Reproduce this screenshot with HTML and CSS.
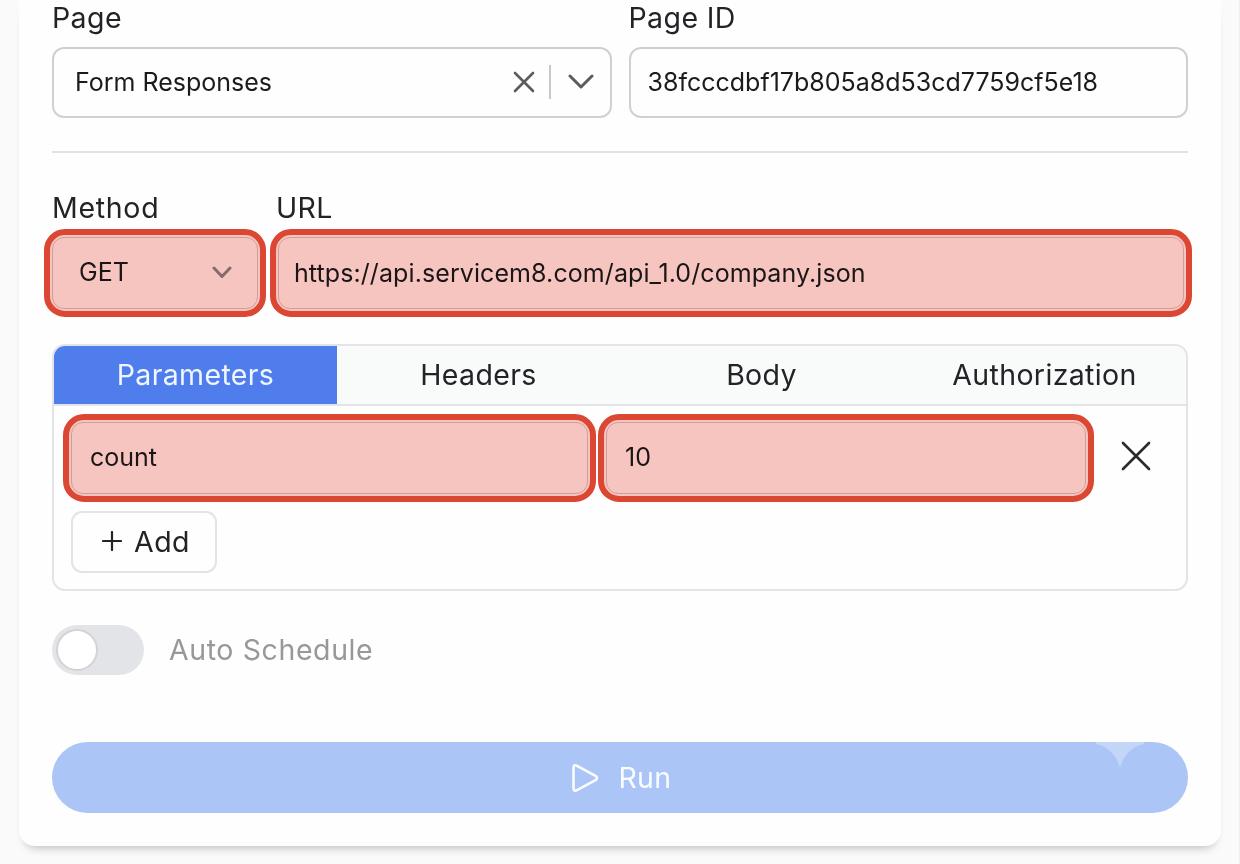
FILE: index.html
```
<!DOCTYPE html>
<html lang="en">
<head>
    <meta charset="UTF-8">
    <meta name="viewport" content="width=device-width, initial-scale=1.0">
    <title>API Request</title>
    <link rel="stylesheet" href="styles.css">
</head>
<body>
  <main class="card">
    <div class="page-row">
      <div class="form-group">
        <label class="label">Page</label>
        <div class="field select">
          <span class="select-value">Form Responses</span>
          <svg class="icon-clear" viewBox="0 0 22 22"><path d="M2 2L20 20M20 2L2 20"/></svg>
          <span class="separator"></span>
          <svg class="icon-chevron" viewBox="0 0 26 16"><path d="M2 2L13 13L24 2"/></svg>
        </div>
      </div>
      <div class="form-group">
        <label class="label">Page ID</label>
        <div class="field page-id"><span>38fcccdbf17b805a8d53cd7759cf5e18</span></div>
      </div>
    </div>

    <hr class="divider">

    <div class="request-row">
      <div class="form-group method">
        <label class="label wide">Method</label>
        <div class="field highlight">
          <span class="method-value">GET</span>
          <svg class="icon-chevron-small" viewBox="0 0 20 13"><path d="M2 2L10 10.5L18 2"/></svg>
        </div>
      </div>
      <div class="form-group url">
        <label class="label">URL</label>
        <div class="field highlight"><span class="url-value">https://api.servicem8.com/api_1.0/company.json</span></div>
      </div>
    </div>

    <section class="panel">
      <nav class="tabs">
        <a class="tab active">Parameters</a>
        <a class="tab">Headers</a>
        <a class="tab">Body</a>
        <a class="tab">Authorization</a>
      </nav>
      <div class="panel-body">
        <div class="param-row">
          <div class="field highlight param-key"><span>count</span></div>
          <div class="field highlight param-value"><span>10</span></div>
          <svg class="icon-remove" viewBox="0 0 30 30"><path d="M2 2L28 28M28 2L2 28"/></svg>
        </div>
        <button class="add-btn">
          <svg class="icon-plus" viewBox="0 0 20 20"><path d="M10 1V19M1 10H19"/></svg>
          <span>Add</span>
        </button>
      </div>
    </section>

    <div class="schedule">
      <span class="toggle"><span class="knob"></span></span>
      <span class="schedule-label">Auto Schedule</span>
    </div>

    <button class="run-btn">
      <svg class="icon-play" viewBox="0 0 28 30"><path d="M2.5 5V25Q2.5 29 6 27.2L24.5 17.2Q27.5 15 24.5 12.8L6 2.8Q2.5 1 2.5 5Z"/></svg>
      <span>Run</span>
      <svg class="sparkle" viewBox="0 0 48 26"><path d="M0 0H48V2C36 4 27 14 24 26C21 14 12 4 0 2Z"/></svg>
    </button>
  </main>
</body>
</html>
```
FILE: styles.css
```
* {
    box-sizing: border-box;
}

body {
    font-family: 'Inter', sans-serif;
    margin: 0;
    height: 864px;
    overflow: hidden;
    background-color: #fafafa;
    border-right: 1px solid #eeeeee;
    color: #222326;
}

svg {
    display: block;
    flex: none;
    fill: none;
    stroke-linecap: round;
    stroke-linejoin: round;
}

/* Card */
.card {
    width: 1202px;
    height: 846px;
    margin-left: 19px;
    padding: 0 33px 33px;
    background: #fefefe;
    border-radius: 0 0 16px 16px;
    box-shadow: 0 8px 10px -6px rgba(0,0,0,0.24);
}

.page-row,
.request-row {
    display: flex;
    gap: 17px;
}

.page-row .form-group {
    flex: 1;
}

.label {
    display: block;
    margin-bottom: 11px;
    font-size: 28.5px;
    line-height: 36px;
    letter-spacing: 0.4px;
}

.label.wide {
    letter-spacing: 0.7px;
}

/* Fields */
.field {
    display: flex;
    align-items: center;
    height: 71px;
    border: 2px solid #d0d0d4;
    border-radius: 12px;
    font-size: 25px;
    color: #1b1b1d;
    white-space: nowrap;
}

.select {
    padding: 0 16px 1px 21px;
}

.select-value {
    flex: 1;
}

.icon-clear {
    width: 22px;
    height: 22px;
    stroke: #5c5c5e;
    stroke-width: 2.6;
}

.separator {
    width: 2px;
    height: 34px;
    margin: 0 17px 0 14px;
    background: #c8c8ca;
}

.icon-chevron {
    width: 26px;
    height: 16px;
    stroke: #5c5c5e;
    stroke-width: 3;
}

.page-id {
    padding: 0 0 2px 17px;
}

.divider {
    height: 2px;
    margin: 33px 0 37px;
    border: 0;
    background: #e3e3e6;
}

/* Red callout drawn over a field */
.highlight {
    position: relative;
    height: 72px;
    border: 1px solid #d6cccc;
}

.highlight::after {
    content: "";
    position: absolute;
    inset: -9px;
    border: 6px solid #dd4733;
    border-radius: 21px;
    background: #f7c6c1;
    mix-blend-mode: multiply;
}

.method {
    width: 207px;
}

.method .field {
    margin: 0 1px 0 0;
    padding: 0 25px 2px 26px;
    justify-content: space-between;
}

.icon-chevron-small {
    width: 20px;
    height: 13px;
    stroke: #8a8a8e;
    stroke-width: 3;
}

.url {
    flex: 1;
}

.url .field {
    margin: 0 4px 0 2px;
    padding-left: 15px;
}

.url-value {
    letter-spacing: 0.09px;
}

/* Tabs panel */
.panel {
    height: 247px;
    margin-top: 35px;
    border: 2px solid #e3e4e7;
    border-radius: 13px;
    overflow: hidden;
}

.tabs {
    display: flex;
    height: 60px;
    background: #f9fafa;
    border-bottom: 2px solid #e3e4e7;
}

.tab {
    display: flex;
    flex: 1;
    align-items: center;
    justify-content: center;
    padding-bottom: 2px;
    font-size: 28.5px;
    letter-spacing: 0.35px;
}

.active {
    background: #507dec;
    color: #f0f6ff;
}

.panel-body {
    padding: 16px 35px 16px 17px;
}

.param-row {
    display: flex;
    align-items: center;
}

.param-key {
    width: 517px;
    margin-right: 18px;
    padding-left: 18px;
}

.param-value {
    width: 480px;
    padding-left: 18px;
}

.param-row .field {
    padding-bottom: 2px;
}

.icon-remove {
    width: 30px;
    height: 30px;
    margin: 0 0 4px auto;
    stroke: #2b2b2d;
    stroke-width: 2.6;
}

.add-btn {
    display: flex;
    align-items: center;
    justify-content: center;
    gap: 12px;
    width: 146px;
    height: 62px;
    margin-top: 17px;
    padding: 0 0 2px 4px;
    background: #fefefe;
    border: 2px solid #e3e4e7;
    border-radius: 11px;
    font: 28.5px 'Inter', sans-serif;
    letter-spacing: 0.4px;
    color: #222326;
}

.icon-plus {
    width: 20px;
    height: 20px;
    stroke: #222326;
    stroke-width: 2.2;
}

/* Auto schedule */
.schedule {
    display: flex;
    align-items: center;
    gap: 25px;
    margin-top: 34px;
}

.toggle {
    width: 92px;
    height: 50px;
    padding: 4px;
    border-radius: 25px;
    background: #e3e4e8;
}

.knob {
    display: block;
    width: 42px;
    height: 42px;
    border: 2px solid #d3d3d6;
    border-radius: 50%;
    background: #fff;
}

.schedule-label {
    padding-bottom: 2px;
    font-size: 28.5px;
    letter-spacing: 0.6px;
    color: #98989b;
}

/* Run button */
.run-btn {
    position: relative;
    display: flex;
    align-items: center;
    justify-content: center;
    gap: 19px;
    width: 100%;
    height: 71px;
    margin-top: 67px;
    padding: 0 0 0 3px;
    border: 0;
    border-radius: 36px;
    background: #abc5f6;
    font: 28.5px 'Inter', sans-serif;
    letter-spacing: 0.4px;
    color: #fafcff;
}

.icon-play {
    width: 28px;
    height: 30px;
    stroke: #fafcff;
    stroke-width: 2.6;
}

.sparkle {
    position: absolute;
    top: 0;
    right: 44px;
    width: 48px;
    height: 26px;
    fill: #c4d6f8;
}
```
